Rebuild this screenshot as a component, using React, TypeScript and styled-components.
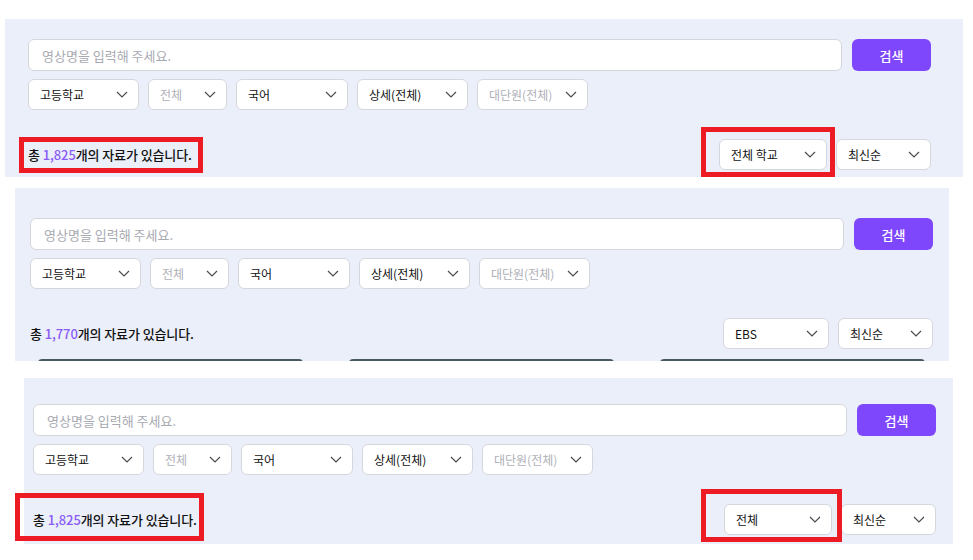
import React from "react";
import styled, { createGlobalStyle } from "styled-components";

const GlobalStyle = createGlobalStyle`
  html, body { margin: 0; padding: 0; background: #ffffff; }
  body { font-family: "Noto Sans CJK KR", "Noto Sans", sans-serif; color: #111111; }
  * { box-sizing: border-box; }
`;

const Page = styled.div`
  display: flex;
  flex-direction: column;
  align-items: flex-start;
  padding-top: 19px;
`;

const Panel = styled.section<{ $left: number; $width: number; $gap: number; $padTop: number; $height: number; $clip?: boolean }>`
  margin-left: ${(p) => p.$left}px;
  margin-top: ${(p) => p.$gap}px;
  width: ${(p) => p.$width}px;
  height: ${(p) => p.$height}px;
  padding-top: ${(p) => p.$padTop}px;
  background: #ebeff9;
  overflow: ${(p) => (p.$clip ? "hidden" : "visible")};
  position: relative;
`;

const Inner = styled.div<{ $padLeft: number }>`
  width: 903px;
  margin-left: ${(p) => p.$padLeft}px;
  display: flex;
  flex-direction: column;
`;

const SearchRow = styled.div`
  display: flex;
  align-items: center;
  gap: 10px;
  height: 32px;
`;

const SearchInput = styled.div`
  flex: 1;
  height: 32px;
  background: #ffffff;
  border: 1px solid #d6d7dd;
  border-radius: 6px;
  display: flex;
  align-items: center;
  padding-left: 13px;
  font-size: 13px;
  color: #a8aab2;
`;

const SearchButton = styled.button`
  width: 79px;
  height: 32px;
  border: none;
  border-radius: 6px;
  background: #7f47fb;
  color: #ffffff;
  font-family: inherit;
  font-size: 13px;
  font-weight: 500;
  padding: 0;
`;

const FilterRow = styled.div`
  display: flex;
  gap: 9px;
  margin-top: 8px;
`;

const Select = styled.div<{ $w: number; $muted?: boolean }>`
  width: ${(p) => p.$w}px;
  height: 31px;
  background: #ffffff;
  border: 1px solid #d6d7dd;
  border-radius: 6px;
  display: flex;
  align-items: center;
  justify-content: space-between;
  padding: 0 10px 0 11px;
  font-size: 12px;
  color: ${(p) => (p.$muted ? "#aeb0b8" : "#111111")};
  position: relative;
  white-space: nowrap;
`;

const ResultRow = styled.div`
  display: flex;
  align-items: center;
  justify-content: space-between;
  margin-top: 29px;
`;

const Total = styled.div`
  font-size: 13px;
  font-weight: 500;
  color: #111111;
  position: relative;
  letter-spacing: -0.1px;
`;

const Count = styled.span`
  color: #8a5cf7;
  font-weight: 500;
`;

const SortGroup = styled.div`
  display: flex;
  gap: 9px;
`;

const Mark = styled.div<{ $t: number; $r: number; $b: number; $l: number }>`
  position: absolute;
  top: ${(p) => p.$t}px;
  right: ${(p) => p.$r}px;
  bottom: ${(p) => p.$b}px;
  left: ${(p) => p.$l}px;
  border: 5px solid #ed1c24;
  pointer-events: none;
  z-index: 2;
`;

const CardRow = styled.div`
  display: grid;
  grid-template-columns: repeat(3, 265px);
  justify-content: space-between;
  padding: 0 8px;
  margin-top: 10px;
`;

const CardTop = styled.div`
  height: 40px;
  background: #46595e;
  border-radius: 4px 4px 0 0;
`;

const Chevron = () => (
  <svg width="12" height="7" viewBox="0 0 12 7" fill="none">
    <polyline points="1,1 6,6 11,1" stroke="#4a4a4f" strokeWidth="1.2" fill="none" />
  </svg>
);

type Box = { t: number; r: number; b: number; l: number };

type PanelSpec = {
  left: number;
  width: number;
  gap: number;
  padTop: number;
  padLeft: number;
  height: number;
  count: string;
  source: string;
  sourceW: number;
  totalMark?: Box;
  sourceMark?: Box;
  cards?: boolean;
};

const panels: PanelSpec[] = [
  {
    left: 5, width: 958, gap: 0, padTop: 20, padLeft: 23, height: 158,
    count: "1,825", source: "전체 학교", sourceW: 108,
    totalMark: { t: -8, r: -11, b: -9, l: -9 },
    sourceMark: { t: -13, r: -9, b: -8, l: -19 },
  },
  {
    left: 15, width: 934, gap: 11, padTop: 30, padLeft: 15, height: 173,
    count: "1,770", source: "EBS", sourceW: 106, cards: true,
  },
  {
    left: 24, width: 929, gap: 17, padTop: 26, padLeft: 9, height: 166,
    count: "1,825", source: "전체", sourceW: 108,
    totalMark: { t: -17, r: -7, b: -12, l: -18 },
    sourceMark: { t: -16, r: -11, b: -8, l: -24 },
  },
];

const filters = [
  { label: "고등학교", w: 111 },
  { label: "전체", w: 79, muted: true },
  { label: "국어", w: 112 },
  { label: "상세(전체)", w: 111 },
  { label: "대단원(전체)", w: 111, muted: true },
];

export default function App() {
  return (
    <>
      <GlobalStyle />
      <Page>
        {panels.map((p, i) => (
          <Panel
            key={i}
            $left={p.left}
            $width={p.width}
            $gap={p.gap}
            $padTop={p.padTop}
            $height={p.height}
            $clip={p.cards}
          >
            <Inner $padLeft={p.padLeft}>
              <SearchRow>
                <SearchInput>영상명을 입력해 주세요.</SearchInput>
                <SearchButton>검색</SearchButton>
              </SearchRow>
              <FilterRow>
                {filters.map((f) => (
                  <Select key={f.label} $w={f.w} $muted={f.muted}>
                    <span>{f.label}</span>
                    <Chevron />
                  </Select>
                ))}
              </FilterRow>
              <ResultRow>
                <Total>
                  총 <Count>{p.count}</Count>개의 자료가 있습니다.
                  {p.totalMark && <Mark $t={p.totalMark.t} $r={p.totalMark.r} $b={p.totalMark.b} $l={p.totalMark.l} />}
                </Total>
                <SortGroup>
                  <Select $w={p.sourceW}>
                    <span>{p.source}</span>
                    <Chevron />
                    {p.sourceMark && <Mark $t={p.sourceMark.t} $r={p.sourceMark.r} $b={p.sourceMark.b} $l={p.sourceMark.l} />}
                  </Select>
                  <Select $w={95}>
                    <span>최신순</span>
                    <Chevron />
                  </Select>
                </SortGroup>
              </ResultRow>
              {p.cards && (
                <CardRow>
                  <CardTop />
                  <CardTop />
                  <CardTop />
                </CardRow>
              )}
            </Inner>
          </Panel>
        ))}
      </Page>
    </>
  );
}
